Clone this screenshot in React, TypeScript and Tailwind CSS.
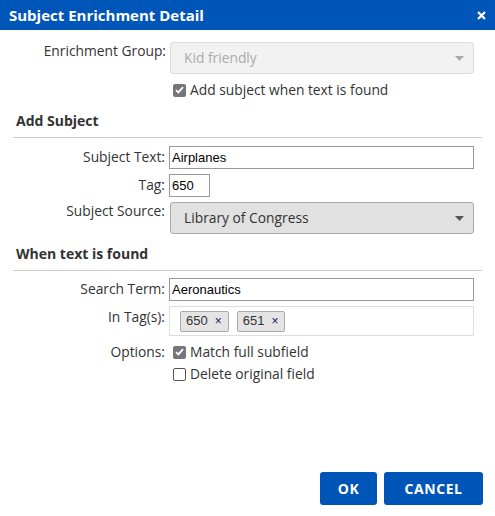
import React from "react";

const sans = "font-['Open_Sans',_'Liberation_Sans',_sans-serif]";
const arial = "font-['Liberation_Sans',_Arial,_sans-serif]";

function Caret({ color }: { color: string }) {
  return (
    <svg width="9" height="5" viewBox="0 0 9 5" className="shrink-0">
      <path d="M0 0 L9 0 L4.5 5 Z" fill={color} />
    </svg>
  );
}

function Check({ checked, label }: { checked: boolean; label: string }) {
  return (
    <label className="flex h-[18px] items-center gap-[4px] text-[13.8px] text-[#333]">
      {checked ? (
        <span className="flex h-[13px] w-[13px] items-center justify-center rounded-[2px] bg-[#767676]">
          <svg width="9" height="8" viewBox="0 0 9 8">
            <path d="M1 4.2 L3.4 6.4 L8 1.2" stroke="#fff" strokeWidth="1.8" fill="none" />
          </svg>
        </span>
      ) : (
        <span className="h-[13px] w-[13px] rounded-[2px] border border-[#555] bg-white" />
      )}
      <span>{label}</span>
    </label>
  );
}

function Chip({ text }: { text: string }) {
  return (
    <span
      className={`flex h-[21px] items-center gap-[7px] rounded-[2px] border border-[#aaa] bg-[#e4e4e4] pl-[5px] pr-[6px] text-[13px] text-[#333] ${arial}`}
    >
      {text}
      <span className="text-[12px] leading-none text-[#1a1a5e]">×</span>
    </span>
  );
}

function Label({ children, className = "" }: { children: React.ReactNode; className?: string }) {
  return <div className={`pr-[4px] text-right text-[13.8px] leading-[18px] text-[#333] ${className}`}>{children}</div>;
}

function Heading({ children }: { children: React.ReactNode }) {
  return (
    <div className="mx-[13px]">
      <div className="pl-[3px] text-[14px] font-bold leading-[20px] text-[#333]">{children}</div>
      <div className="mt-[6px] h-px bg-[#ccc]" />
    </div>
  );
}

export default function App() {
  return (
    <div className={`flex h-[516px] w-[495px] flex-col bg-white ${sans}`}>
      <div className="flex h-[30px] items-center justify-between bg-[#0055b8] pl-[9px] pr-[9px]">
        <span className="text-[15px] font-bold text-white">Subject Enrichment Detail</span>
        <svg width="9" height="9" viewBox="0 0 9 9">
          <path d="M1 1 L8 8 M8 1 L1 8" stroke="#fff" strokeWidth="2.2" />
        </svg>
      </div>

      <div className="mt-[12px] grid grid-cols-[170px_304px]">
        <Label>Enrichment Group:</Label>
        <div className="flex h-[32px] items-center justify-between rounded-[3px] border border-[#ddd] bg-[#f2f2f2] pl-[13px] pr-[9px]">
          <span className="text-[13.8px] text-[#aaa]">Kid friendly</span>
          <Caret color="#aaa" />
        </div>
        <div />
        <div className="mt-[7px] pl-[3px]">
          <Check checked label="Add subject when text is found" />
        </div>
      </div>

      <div className="mt-[12px]">
        <Heading>Add Subject</Heading>
      </div>

      <div className="mt-[8px] grid grid-cols-[169px_305px] gap-y-[5px]">
        <Label className="pt-[2px]">Subject Text:</Label>
        <div className={`flex h-[23px] items-center border border-[#999] px-[2px] text-[13px] text-black ${arial}`}>
          Airplanes
        </div>
        <Label className="pt-[2px]">Tag:</Label>
        <div className={`flex h-[23px] w-[41px] items-center border border-[#999] px-[2px] text-[13px] text-black ${arial}`}>
          650
        </div>
        <Label className="pl-[1px]">Subject Source:</Label>
        <div className="ml-[1px] flex h-[32px] items-center justify-between rounded-[3px] border border-[#aaa] bg-[#e1e1e1] pl-[13px] pr-[9px]">
          <span className="text-[13.8px] text-[#333]">Library of Congress</span>
          <Caret color="#555" />
        </div>
      </div>

      <div className="mt-[10px]">
        <Heading>When text is found</Heading>
      </div>

      <div className="mt-[7px] grid grid-cols-[169px_305px] gap-y-[5px]">
        <Label className="pt-[2px]">Search Term:</Label>
        <div className={`flex h-[23px] items-center border border-[#999] px-[2px] text-[13px] text-black ${arial}`}>
          Aeronautics
        </div>
        <Label className="pt-[2px]">In Tag(s):</Label>
        <div className="flex h-[30px] items-center gap-[8px] border border-[#ddd] pl-[10px]">
          <Chip text="650" />
          <Chip text="651" />
        </div>
        <Label className="pt-[2px]">Options:</Label>
        <div className="flex flex-col gap-[4px] pl-[4px] pt-[2px]">
          <Check checked label="Match full subfield" />
          <Check checked={false} label="Delete original field" />
        </div>
      </div>

      <div className="mt-auto flex justify-end gap-[7px] pb-[11px] pr-[12px]">
        <button className="h-[33px] w-[57px] rounded-[3px] bg-[#0055b8] text-[14px] font-bold tracking-[0.6px] text-white">
          OK
        </button>
        <button className="h-[33px] w-[99px] rounded-[3px] bg-[#0055b8] text-[14px] font-bold tracking-[0.6px] text-white">
          CANCEL
        </button>
      </div>
    </div>
  );
}
